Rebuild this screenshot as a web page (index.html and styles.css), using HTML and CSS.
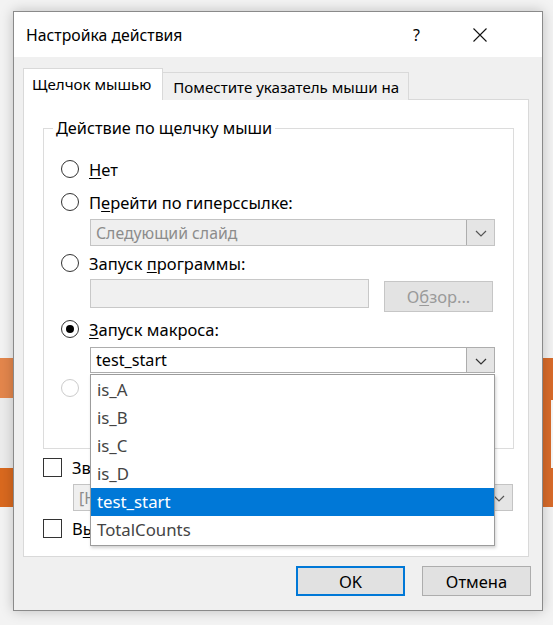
FILE: index.html
```html
<!DOCTYPE html>
<html lang="ru">
<head>
<meta charset="utf-8">
<title>Настройка действия</title>
<link rel="stylesheet" href="styles.css">
</head>
<body>
<div class="dialog">
  <div class="titlebar">
    <span class="title">Настройка действия</span>
    <span class="help">?</span>
    <span class="close"><svg width="14" height="14" viewBox="0 0 14 14"><path d="M0.5 0.5 L13.5 13.5 M13.5 0.5 L0.5 13.5" stroke="#111" stroke-width="1.1" fill="none"/></svg></span>
  </div>
  <div class="content">
    <div class="tabs">
      <div class="tab active">Щелчок мышью</div>
      <div class="tab">Поместите указатель мыши на</div>
    </div>
    <div class="panel">
      <fieldset class="group">
        <legend>Действие по щелчку мыши</legend>
        <div class="opt first"><span class="radio"></span><span><u>Н</u>ет</span></div>
        <div class="opt gap7"><span class="radio"></span><span>П<u>е</u>рейти по гиперссылке:</span></div>
        <div class="combo disabled indent gap4">
          <span class="combo-text">Следующий слайд</span>
          <span class="arrow"><svg width="12" height="7" viewBox="0 0 12 7"><path d="M1 1 L6 6 L11 1" stroke="#555" stroke-width="1.2" fill="none"/></svg></span>
        </div>
        <div class="opt gap4"><span class="radio"></span><span>Запуск <u>п</u>рограммы:</span></div>
        <div class="prog-row indent">
          <span class="input disabled"></span>
          <span class="browse">О<u>б</u>зор...</span>
        </div>
        <div class="opt gap4"><span class="radio checked"></span><span><u>З</u>апуск макроса:</span></div>
        <div class="combo-wrap indent">
          <div class="combo">
            <span class="combo-text dark">test_start</span>
            <span class="arrow"><svg width="12" height="7" viewBox="0 0 12 7"><path d="M1 1 L6 6 L11 1" stroke="#333" stroke-width="1.2" fill="none"/></svg></span>
          </div>
          <ul class="list">
            <li>is_A</li>
            <li>is_B</li>
            <li>is_C</li>
            <li>is_D</li>
            <li class="sel">test_start</li>
            <li>TotalCounts</li>
          </ul>
        </div>
        <div class="opt gap2"><span class="radio off"></span></div>
      </fieldset>
      <div class="check-row"><span class="check"></span><span>Звук:</span></div>
      <div class="combo disabled sound">
        <span class="combo-text">[Нет звука]</span>
        <span class="arrow"><svg width="12" height="7" viewBox="0 0 12 7"><path d="M1 1 L6 6 L11 1" stroke="#555" stroke-width="1.2" fill="none"/></svg></span>
      </div>
      <div class="check-row"><span class="check"></span><span>В<u>ы</u>делить</span></div>
    </div>
    <div class="buttons">
      <button class="btn default">OK</button>
      <button class="btn">Отмена</button>
    </div>
  </div>
</div>
</body>
</html>
```
FILE: styles.css
```css
html, body {
  margin: 0;
  height: 100%;
}
body {
  font-family: "Noto Sans", "Open Sans", sans-serif;
  font-size: 16.5px;
  color: #000;
  background:
    linear-gradient(#f7f7f7, #f7f7f7) 551px 400px / 2px 68px no-repeat,
    linear-gradient(to bottom, #e3864c 0 40px, #ececec 40px 110px, #d9691f 110px 149px) 0 358px / 13px 149px no-repeat,
    linear-gradient(#d86b2a, #d86b2a) 543px 358px / 10px 149px no-repeat,
    #f3f3f3;
  overflow: hidden;
}
.dialog {
  margin: 11px 0 0 13px;
  width: 530px;
  height: 600px;
  box-sizing: border-box;
  border: 1px solid #8a8a8a;
  background: #f0f0f0;
  box-shadow: 0 0 12px rgba(0, 0, 0, 0.22);
  display: flex;
  flex-direction: column;
}
.titlebar {
  height: 45px;
  flex: none;
  background: #fff;
  display: flex;
  align-items: center;
  padding: 0 55px 0 12px;
}
.title {
  font-size: 15.8px;
  line-height: 20px;
}
.help {
  margin-left: auto;
  font-size: 16px;
  line-height: 20px;
}
.close {
  margin-left: 53px;
  display: flex;
}
.content {
  padding: 11px 13px 0 9px;
  display: flex;
  flex-direction: column;
}
.tabs {
  display: flex;
  align-items: flex-end;
  margin-bottom: -1px;
  position: relative;
  z-index: 1;
  font-size: 15.1px;
}
.tab {
  box-sizing: border-box;
  height: 28px;
  padding: 1px 9px 0 10px;
  border: 1px solid #d9d9d9;
  border-bottom: none;
  border-left: none;
  background: #f0f0f0;
  display: flex;
  align-items: center;
}
.tab.active {
  height: 32px;
  background: #fff;
  border-left: 1px solid #d9d9d9;
  padding: 0 11px 2px 8px;
}
.panel {
  box-sizing: border-box;
  height: 458px;
  border: 1px solid #d9d9d9;
  background: #fff;
  padding: 0 14px 0 19px;
}
.group {
  margin: 18px 0 0;
  padding: 0;
  box-sizing: border-box;
  height: 331px;
  border: 1px solid #dcdcdc;
  min-width: 0;
}
.group legend {
  margin-left: 9px;
  padding: 0 3px;
  line-height: 20px;
  font-size: 16.3px;
}
.opt {
  display: flex;
  align-items: center;
  height: 26px;
  padding-left: 17px;
  gap: 10px;
}
.opt.first { margin-top: 18px; }
.gap7 { margin-top: 7px; }
.gap4 { margin-top: 4px; }
.gap2 { margin-top: 2px; }
.radio {
  width: 18px;
  height: 18px;
  box-sizing: border-box;
  border: 1.5px solid #333;
  border-radius: 50%;
  display: inline-flex;
  align-items: center;
  justify-content: center;
  flex: none;
}
.radio.checked::after {
  content: "";
  width: 8px;
  height: 8px;
  border-radius: 50%;
  background: #000;
}
.radio.off {
  border-color: #cccccc;
}
.indent {
  margin-left: 46px;
  width: 405px;
}
.combo {
  box-sizing: border-box;
  height: 26px;
  border: 1px solid #adadad;
  background: #fff;
  display: flex;
  align-items: stretch;
}
.combo.disabled {
  background: #efefef;
  border-color: #c4c4c4;
  height: 27px;
}
.combo-text {
  flex: 1;
  display: flex;
  align-items: center;
  padding-left: 5px;
  color: #8c8c8c;
  font-size: 15.8px;
  white-space: nowrap;
  overflow: hidden;
}
.combo-text.dark {
  color: #000;
  font-size: 16.2px;
}
.arrow {
  width: 28px;
  flex: none;
  box-sizing: border-box;
  border-left: 1px solid #adadad;
  background: #e5e5e5;
  display: flex;
  align-items: center;
  justify-content: center;
  padding-top: 2px;
}
.prog-row {
  margin-top: 3px;
  display: flex;
  align-items: flex-start;
  height: 33px;
}
.input {
  width: 279px;
  height: 29px;
  box-sizing: border-box;
  border: 1px solid #c8c8c8;
  background: #f0f0f0;
}
.browse {
  margin: 2px 0 0 15px;
  width: 109px;
  height: 31px;
  box-sizing: border-box;
  border: 1px solid #c6c6c6;
  background: #e3e3e3;
  color: #9a9a9a;
  display: flex;
  align-items: center;
  justify-content: center;
}
.combo-wrap {
  margin-top: 5px;
  position: relative;
}
.list {
  position: absolute;
  left: 0;
  right: 0;
  top: calc(100% + 1px);
  margin: 0;
  padding: 1px 0;
  list-style: none;
  background: #fff;
  border: 1px solid #9c9c9c;
  box-shadow: 1px 2px 3px rgba(0, 0, 0, 0.18);
  z-index: 5;
}
.list li {
  height: 28px;
  line-height: 28px;
  padding-left: 6px;
  color: #444;
  font-size: 16.8px;
}
.list li.sel {
  background: #0078d7;
  color: #fff;
}
.check-row {
  margin-top: 5px;
  height: 26px;
  display: flex;
  align-items: center;
  gap: 10px;
  white-space: nowrap;
}
.check-row + .combo + .check-row {
  margin-top: 4px;
}
.check {
  width: 19px;
  height: 19px;
  box-sizing: border-box;
  border: 1.5px solid #333;
  flex: none;
}
.sound {
  margin: 4px 0 0 30px;
  width: 440px;
  height: 26px;
}
.buttons {
  margin: 9px -2px 0 0;
  display: flex;
  justify-content: flex-end;
  gap: 17px;
}
.btn {
  font: inherit;
  color: #000;
  width: 109px;
  height: 30px;
  box-sizing: border-box;
  border: 1px solid #adadad;
  background: #e1e1e1;
  padding: 0;
}
.btn.default {
  border: 2px solid #0078d7;
}
u {
  text-decoration-thickness: 1px;
  text-underline-offset: 2px;
}
```
